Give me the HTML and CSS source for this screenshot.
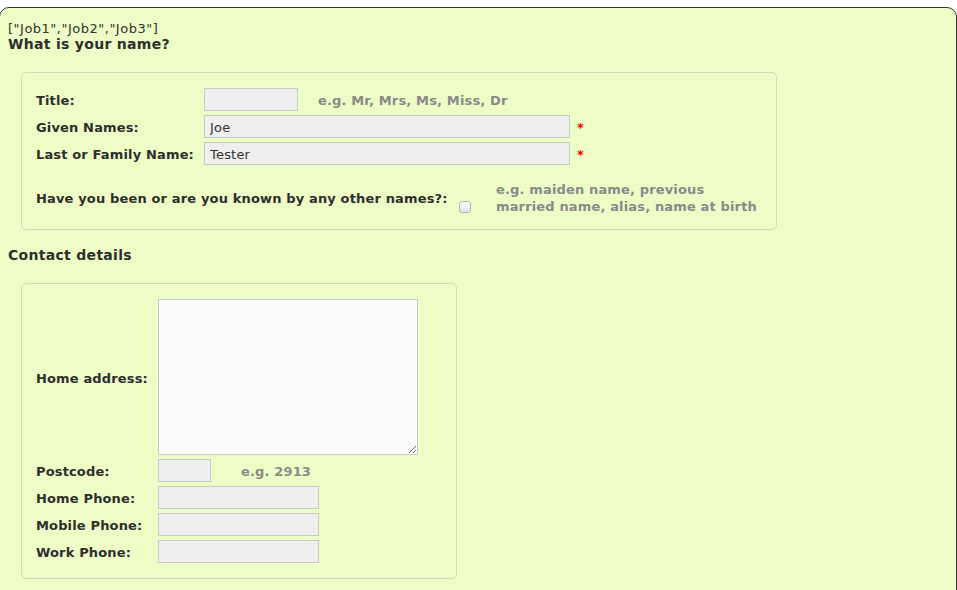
FILE: index.html
```html
<!DOCTYPE html>
<html>
<head>
<meta charset="utf-8">
<link rel="stylesheet" href="styles.css">
</head>
<body>
<div class="panel">
  <div class="json">["Job1","Job2","Job3"]</div>
  <h2 class="heading">What is your name?</h2>
  <div class="box box-name">
    <div class="row">
      <label class="label name-label">Title:</label>
      <input class="field f-title" type="text">
      <span class="hint hint-title">e.g. Mr, Mrs, Ms, Miss, Dr</span>
    </div>
    <div class="row">
      <label class="label name-label">Given Names:</label>
      <input class="field f-long" type="text" value="Joe">
      <span class="req">*</span>
    </div>
    <div class="row">
      <label class="label name-label">Last or Family Name:</label>
      <input class="field f-long" type="text" value="Tester">
      <span class="req">*</span>
    </div>
    <div class="row row-other">
      <label class="label other-label">Have you been or are you known by any other names?:</label>
      <input class="check" type="checkbox">
      <span class="hint hint-other">e.g. maiden name, previous<br>married name, alias, name at birth</span>
    </div>
  </div>
  <h2 class="heading heading-contact">Contact details</h2>
  <div class="box box-contact">
    <div class="row row-address">
      <label class="label contact-label">Home address:</label>
      <textarea class="area"></textarea>
    </div>
    <div class="row">
      <label class="label contact-label">Postcode:</label>
      <input class="field f-post" type="text">
      <span class="hint hint-post">e.g. 2913</span>
    </div>
    <div class="row">
      <label class="label contact-label">Home Phone:</label>
      <input class="field f-phone" type="text">
    </div>
    <div class="row">
      <label class="label contact-label">Mobile Phone:</label>
      <input class="field f-phone" type="text">
    </div>
    <div class="row">
      <label class="label contact-label">Work Phone:</label>
      <input class="field f-phone" type="text">
    </div>
  </div>
</div>
</body>
</html>
```

FILE: styles.css
```css
html, body {
  margin: 0;
  padding: 0;
  background: #ffffff;
  height: 100%;
  overflow: hidden;
}

body {
  font-family: "DejaVu Sans", Verdana, sans-serif;
  color: #333333;
  padding-top: 7px;
  box-sizing: border-box;
}

.panel {
  margin-left: -1px;
  border: 1px solid #333333;
  border-radius: 10px;
  background: #edfdc5;
  padding: 13px 8px 40px 8px;
  min-height: 600px;
}

.json {
  font-size: 13px;
  line-height: 15px;
  letter-spacing: 0.5px;
  color: #333333;
}

.heading {
  margin: 0;
  font-size: 14px;
  line-height: 16px;
  letter-spacing: 0.3px;
  font-weight: bold;
  color: #2e2e2e;
}

.heading-contact {
  margin-top: 17px;
}

.box {
  margin: 20px 0 0 13px;
  border: 1px solid #d4d9c4;
  border-radius: 5px;
  display: flex;
  flex-direction: column;
  gap: 4px;
  box-sizing: border-box;
}

.box-name {
  width: 756px;
  padding: 15px 14px 14px 14px;
}

.box-contact {
  width: 436px;
  padding: 15px 14px 15px 14px;
}

.row {
  display: flex;
  align-items: center;
  min-height: 23px;
}

.label {
  font-size: 13px;
  letter-spacing: 0.15px;
  font-weight: bold;
  color: #2e2e2e;
  flex: none;
  padding-top: 2px;
}

.name-label {
  width: 168px;
}

.contact-label {
  width: 122px;
}

.field {
  box-sizing: border-box;
  height: 23px;
  margin: 0;
  border: 1px solid #c8c8c8;
  background: #efefef;
  font-family: "DejaVu Sans", Verdana, sans-serif;
  font-size: 13px;
  letter-spacing: 0.2px;
  color: #333333;
  padding: 1px 5px 0 5px;
  outline: none;
}

.f-title { width: 94px; }
.f-long { width: 366px; }
.f-post { width: 53px; }
.f-phone { width: 161px; }

.hint {
  font-size: 13px;
  letter-spacing: 0.15px;
  font-weight: bold;
  color: #8a8a8a;
}

.hint-title { margin-left: 20px; padding-top: 2px; }
.hint-post { margin-left: 30px; padding-top: 2px; }

.req {
  color: #ee0000;
  font-weight: bold;
  font-size: 13px;
  margin-left: 7px;
  margin-top: 2px;
}

.row-other {
  margin-top: 12px;
}

.other-label {
  width: 423px;
  padding-top: 0;
}

.check {
  -webkit-appearance: none;
  appearance: none;
  box-sizing: border-box;
  width: 12px;
  height: 12px;
  margin: 18px 25px 0 0;
  border: 1px solid #b4b4b4;
  border-radius: 3px;
  background: linear-gradient(#fafafa, #e6e6e6);
  flex: none;
}

.hint-other {
  line-height: 17px;
}

.area {
  box-sizing: border-box;
  width: 260px;
  height: 156px;
  margin: 0;
  border: 1px solid #c8c8c8;
  background: #fcfcfc;
  resize: both;
  outline: none;
}
```
